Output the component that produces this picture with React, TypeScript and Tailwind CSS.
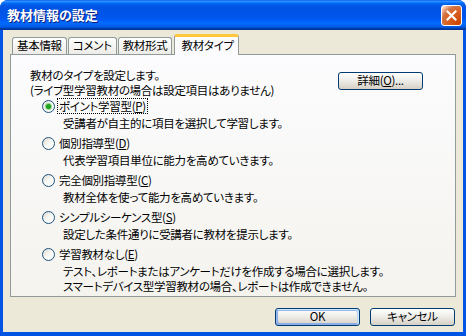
import React from "react";

type Option = {
  key: string;
  label: string;
  desc: string[];
  checked?: boolean;
};

const options: Option[] = [
  { key: "P", label: "ポイント学習型", desc: ["受講者が自主的に項目を選択して学習します。"], checked: true },
  { key: "D", label: "個別指導型", desc: ["代表学習項目単位に能力を高めていきます。"] },
  { key: "C", label: "完全個別指導型", desc: ["教材全体を使って能力を高めていきます。"] },
  { key: "S", label: "シンプルシーケンス型", desc: ["設定した条件通りに受講者に教材を提示します。"] },
  {
    key: "E",
    label: "学習教材なし",
    desc: [
      "テスト、レポートまたはアンケートだけを作成する場合に選択します。",
      "スマートデバイス型学習教材の場合、レポートは作成できません。",
    ],
  },
];

const tabs = ["基本情報", "コメント", "教材形式"];

function Radio({ checked }: { checked?: boolean }) {
  return (
    <span className="relative flex h-[13px] w-[13px] shrink-0 items-center justify-center rounded-full border border-[#1c5180] bg-gradient-to-br from-[#dcd9cd] via-[#f8f8f4] to-white">
      {checked ? (
        <span className="h-[5px] w-[5px] rounded-full bg-[#21a121] shadow-[0_0_0_1px_#8fd88f]" />
      ) : null}
    </span>
  );
}

function XpButton({ children, isDefault }: { children: React.ReactNode; isDefault?: boolean }) {
  return (
    <button
      className={`flex h-[18px] w-[85px] items-center justify-center rounded-[3px] border border-[#003c74] bg-gradient-to-b from-white via-[#ecebe6] to-[#d6d0c5] leading-none text-black ${
        isDefault
          ? "shadow-[inset_-1px_1px_#cee7ff,inset_1px_2px_#98b8ea,inset_-2px_2px_#bcd4f6,inset_1px_-1px_#89ade4,inset_2px_-2px_#89ade4]"
          : ""
      }`}
    >
      {children}
    </button>
  );
}

export default function App() {
  return (
    <div className="h-[336px] w-[466px] bg-white font-['Noto_Sans_CJK_JP','Noto_Sans',sans-serif] [font-feature-settings:'palt']">
      <div className="flex h-full w-full flex-col overflow-hidden rounded-t-[8px] bg-[#0054e3]">
        {/* title bar */}
        <div className="flex h-[30px] shrink-0 items-center justify-between bg-[linear-gradient(to_bottom,#0058ee_0%,#3593ff_4%,#288eff_6%,#127dff_8%,#036ffc_10%,#0262ee_14%,#0057e5_20%,#0054e3_24%,#0055eb_56%,#005bf5_66%,#026afe_76%,#0062ef_86%,#0052d6_92%,#0040ab_94%,#003092_100%)] pl-[7px] pr-[4px]">
          <span className="text-[13px] font-bold text-white [text-shadow:1px_1px_0_#0a1f80]">教材情報の設定</span>
          <span className="flex h-[21px] w-[21px] items-center justify-center rounded-[3px] border border-white bg-[radial-gradient(circle_at_90%_90%,#cc4600_0%,#dc6527_55%,#cd7546_70%,#ffccb2_90%,#fff_100%)]">
            <svg width="11" height="11" viewBox="0 0 11 11">
              <path d="M1.5 1.5 L9.5 9.5 M9.5 1.5 L1.5 9.5" stroke="white" strokeWidth="2.2" strokeLinecap="square" />
            </svg>
          </span>
        </div>

        {/* body */}
        <div className="mx-[3px] mb-[4px] flex flex-1 flex-col bg-[#ece9d8] pt-[5px] text-[11.5px] tracking-[-0.3px] text-black">
          {/* tab strip */}
          <div className="ml-[9px] flex h-[19px] items-end">
            {tabs.map((t) => (
              <div
                key={t}
                className="mr-[1px] flex h-[17px] items-center rounded-t-[3px] border border-b-0 border-[#919b9c] bg-gradient-to-b from-white to-[#ecebe6] px-[4px] leading-none"
              >
                {t}
              </div>
            ))}
            <div className="relative z-10 -mb-px ml-[1px] flex h-[21px] w-[65px] items-center rounded-t-[3px] border border-b-0 border-[#919b9c] border-t-[3px] border-t-[#ffc83c] bg-[#fcfcfe] pl-[6px] leading-none">
              教材タイプ
            </div>
          </div>

          {/* panel */}
          <div className="ml-[7px] mr-[7px] flex h-[243px] flex-col border border-[#919b9c] bg-gradient-to-b from-[#fcfcfe] to-[#f4f3ee]">
            <div className="mt-[13px] flex items-start justify-between pl-[19px] pr-[32px]">
              <div className="leading-[15px]">
                <div>教材のタイプを設定します。</div>
                <div>(ライブ型学習教材の場合は設定項目はありません)</div>
              </div>
              <div className="mt-[4px]">
                <XpButton>
                  詳細(<span className="underline">O</span>)...
                </XpButton>
              </div>
            </div>

            <div className="mt-[0px] flex flex-col gap-[4px] pl-[31px]">
              {options.map((o) => (
                <div key={o.key} className="flex flex-col">
                  <div className="flex h-[16px] items-center">
                    <Radio checked={o.checked} />
                    <span
                      className={`ml-[2px] px-[1px] leading-[14px] ${
                        o.checked ? "border border-dotted border-black" : "border border-transparent"
                      }`}
                    >
                      {o.label}(<span className="underline">{o.key}</span>)
                    </span>
                  </div>
                  <div className="mt-[2px] pl-[21px] leading-[15px]">
                    {o.desc.map((d) => (
                      <div key={d}>{d}</div>
                    ))}
                  </div>
                </div>
              ))}
            </div>
          </div>

          {/* buttons */}
          <div className="mt-[11px] flex justify-end gap-[10px] pr-[8px]">
            <XpButton isDefault>OK</XpButton>
            <XpButton>キャンセル</XpButton>
          </div>
        </div>
      </div>
    </div>
  );
}
